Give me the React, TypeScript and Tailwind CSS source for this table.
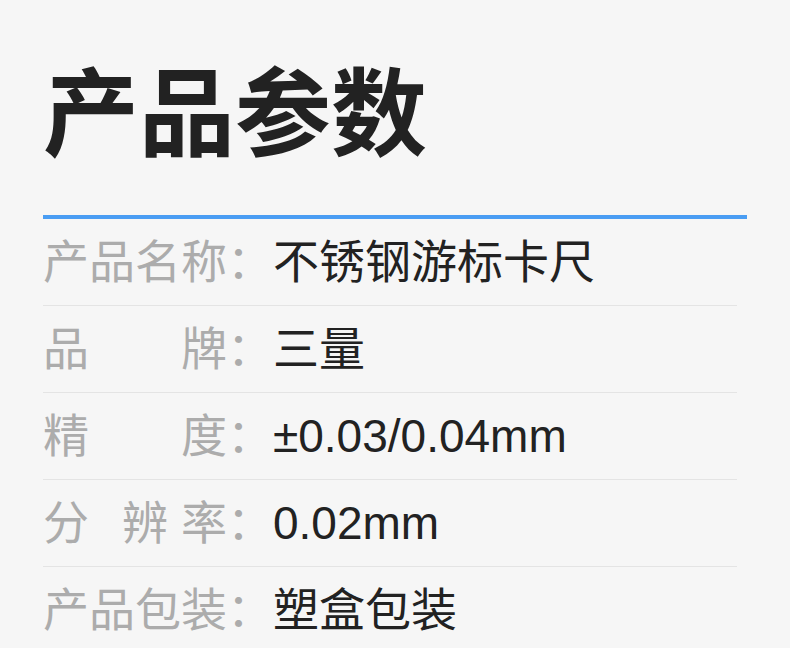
const FONT = "font-['Liberation_Sans','Noto_Sans_CJK_SC',sans-serif]";

const PARAMS: { label: string[]; value: string }[] = [
  { label: ["产", "品", "名", "称"], value: "不锈钢游标卡尺" },
  { label: ["品", "牌"], value: "三量" },
  { label: ["精", "度"], value: "±0.03/0.04mm" },
  { label: ["分", "辨", "率"], value: "0.02mm" },
  { label: ["产", "品", "包", "装"], value: "塑盒包装" },
];

export default function App() {
  return (
    <div className={`w-[790px] h-[648px] overflow-hidden bg-[#f6f6f6] ${FONT}`}>
      <div className="pl-[43px]">
        <h1 className="pt-[59px] text-[96px] leading-[96px] font-bold text-[#222222] font-['Noto_Sans_CJK_SC',sans-serif]">
          产品参数
        </h1>
        <div className="mt-[60px] w-[704px] h-[4px] bg-[#4a9df3]" />

        <div className="w-[694px]">
          {PARAMS.map((p) => (
            <div
              key={p.value}
              className="flex items-center h-[87px] border-b border-[#e4e4e4] text-[46px] leading-[86px]"
            >
              {p.label.length === 3 ? (
                <div className="flex w-[184px] text-[#acacac]">
                  <span>{p.label[0]}</span>
                  <span className="ml-[33px]">{p.label[1]}</span>
                  <span className="ml-[13px]">{p.label[2]}</span>
                </div>
              ) : (
                <div className="flex w-[184px] justify-between text-[#acacac]">
                  {p.label.map((ch, i) => (
                    <span key={i}>{ch}</span>
                  ))}
                </div>
              )}
              <span className="w-[46px] text-[#acacac]">：</span>
              <span className="text-[#222222]">{p.value}</span>
            </div>
          ))}
        </div>
      </div>
    </div>
  );
}
